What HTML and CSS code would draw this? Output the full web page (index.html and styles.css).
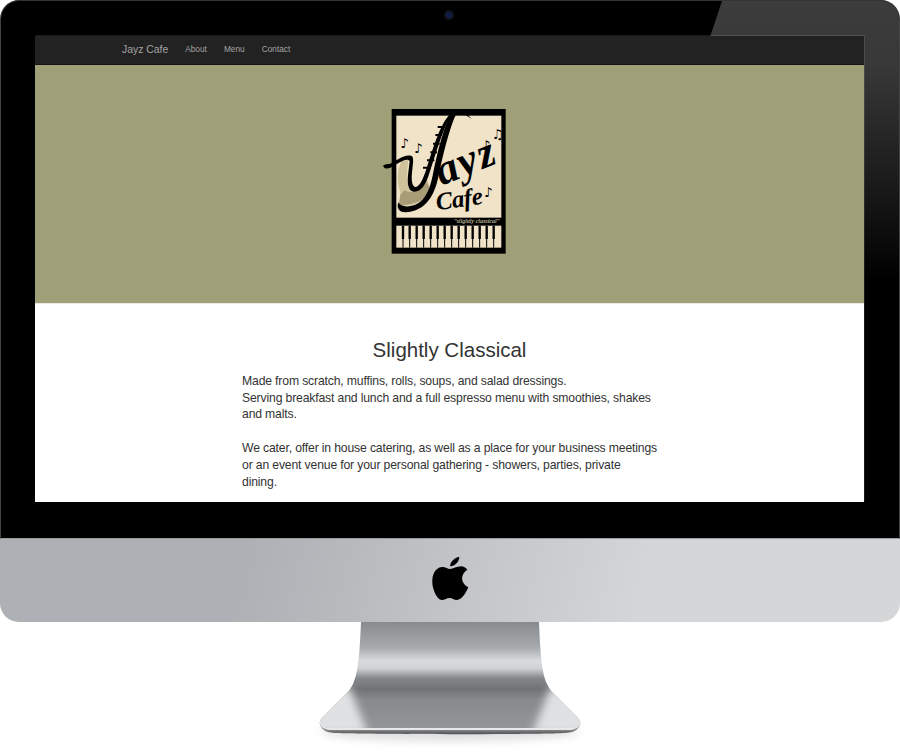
FILE: index.html
```html
<!DOCTYPE html>
<html lang="en">
<head>
<meta charset="utf-8">
<title>Jayz Cafe</title>
<link rel="stylesheet" href="styles.css">
</head>
<body>
<div class="imac">
  <div class="bezel">
    <div class="glare"></div>
    <span class="camera"></span>
    <div class="screen">
      <nav class="nav">
        <a class="brand">Jayz Cafe</a>
        <a class="link">About</a>
        <a class="link">Menu</a>
        <a class="link">Contact</a>
      </nav>
      <header class="hero">
        <svg class="logo" viewBox="16 0 510 510" aria-label="Jayz Cafe logo">
          <rect x="96" y="42" width="342" height="434" fill="#000"/>
          <rect x="110" y="62" width="315" height="306" fill="#f0e3c8"/>
          <rect x="110" y="392" width="315" height="66" fill="#f0e3c8"/>
          <path class="keyline" d="M130 392V458M150 392V458M171 392V458M192 392V458M213 392V458M234 392V458M255 392V458M276 392V458M297 392V458M318 392V458M339 392V458M360 392V458M381 392V458M402 392V458"/>
          <path class="blackkeys" d="M130 392V432M150 392V432M171 392V432M192 392V432M213 392V432M234 392V432M255 392V432M276 392V432M297 392V432M318 392V432M339 392V432M360 392V432M381 392V432M402 392V432"/>
          <path fill="#cfc39c" d="M126 198C112 222 110 262 122 292L118 330C150 340 200 320 214 285L200 246C190 280 168 292 150 282C140 262 142 225 146 195Z"/>
          <path fill="#a79c75" d="M134 286C155 298 182 292 200 262L214 285C198 316 160 332 118 330L122 300Z"/>
          <path fill="#000" d="M262 68C268 60 280 50 296 46C310 44 322 56 336 72C322 62 306 54 290 56C272 92 252 170 238 236C226 300 200 348 136 352C118 352 110 338 116 322C122 336 146 338 170 328C198 314 212 280 220 236C232 176 248 112 268 68C248 112 228 176 208 238C198 272 182 292 162 290C144 288 142 262 146 232L150 198C140 186 116 206 92 218C82 222 74 222 70 212C76 206 84 208 92 206C110 198 130 178 154 182C164 184 160 204 158 224C154 250 156 276 168 276C182 274 192 248 202 216C220 158 240 96 262 68Z"/>
          <path class="pads" d="M234 96H252M227 120H246M220 146H240M212 172H232M202 196H224M190 218H214"/>
          <g class="notes">
            <text x="122" y="158">♪</text>
            <text x="163" y="174">♪</text>
            <text x="366" y="164">♪</text>
            <text x="396" y="132">♫</text>
            <text x="373" y="305">♪</text>
          </g>
          <text class="ayz" x="246" y="272" transform="rotate(-22 246 272)">ayz</text>
          <text class="cafe" x="232" y="346" transform="rotate(-8 232 346)">Cafe</text>
          <text class="tag" x="283" y="385">"slightly classical"</text>
        </svg>
      </header>
      <main class="content">
        <h1 class="title">Slightly Classical</h1>
        <p class="copy">Made from scratch, muffins, rolls, soups, and salad dressings.<br>Serving breakfast and lunch and a full espresso menu with smoothies, shakes and malts.</p>
        <p class="copy">We cater, offer in house catering, as well as a place for your business meetings or an event venue for your personal gathering - showers, parties, private dining.</p>
      </main>
    </div>
  </div>
  <div class="chin">
    <svg class="apple" viewBox="0 0 210 210" aria-label="Apple logo">
      <path d="M105 64C106 50 118 38 133 35C133 50 120 63 105 64Z"/>
      <path d="M105 72C115 72 125 64 138 64C146 64 152 68 157 74C140 85 132 110 160 127C152 145 140 165 126 165C116 165 112 159 104 159C95 159 90 165 80 165C66 165 50 130 52 105C53 80 68 66 82 66C92 66 99 72 105 72Z"/>
    </svg>
  </div>
  <svg class="stand" viewBox="0 0 900 131" aria-hidden="true">
    <defs>
      <linearGradient id="neck" x1="0" y1="0" x2="0" y2="1">
        <stop offset="0" stop-color="#888b8e"/>
        <stop offset=".24" stop-color="#a8abae"/>
        <stop offset=".36" stop-color="#d9dcde"/>
        <stop offset=".43" stop-color="#cfd2d4"/>
        <stop offset=".52" stop-color="#85888b"/>
        <stop offset=".62" stop-color="#707376"/>
        <stop offset=".72" stop-color="#878a8d"/>
        <stop offset="1" stop-color="#94979a"/>
      </linearGradient>
      <linearGradient id="edge" x1="0" y1="0" x2="0" y2="1">
        <stop offset="0" stop-color="#b9bbbd"/>
        <stop offset=".6" stop-color="#8a8c8e"/>
        <stop offset="1" stop-color="#4f5052"/>
      </linearGradient>
      <filter id="soft" x="-10%" y="-100%" width="120%" height="300%">
        <feGaussianBlur stdDeviation="5"/>
      </filter>
      <filter id="sheen" x="-30%" y="-30%" width="160%" height="160%">
        <feGaussianBlur stdDeviation="4"/>
      </filter>
      <clipPath id="body">
        <path d="M361 0H539C540 22 541 50 547 62C550 68 552 70 556 74L578 96C581 99 581 103 578 105C574 108 570 108 566 108H334C330 108 326 108 322 105C319 103 319 99 322 96L344 74C348 70 350 68 353 62C359 50 360 22 361 0Z"/>
      </clipPath>
    </defs>
    <ellipse cx="450" cy="109" rx="130" ry="10" fill="#000" opacity=".13" filter="url(#soft)"/>
    <path fill="url(#edge)" d="M320 101C320 107 326 111 336 111C360 112.500 540 112.500 564 111C574 111 580 107 580 101Z"/>
    <g clip-path="url(#body)">
      <rect x="300" y="0" width="300" height="108" fill="url(#neck)"/>
      <g filter="url(#sheen)">
        <path fill="#dfe1e2" d="M300 82L349 64L368 112H300Z"/>
        <path fill="#dfe1e2" d="M600 82L551 64L532 112H600Z"/>
      </g>
      <path stroke="#e6e8e9" stroke-width="2" fill="none" d="M322 105C326 108 330 107 334 107H566C570 107 574 108 578 105"/>
    </g>
  </svg>
</div>
</body>
</html>
```
FILE: styles.css
```css
* { box-sizing: border-box; }
html, body { margin: 0; padding: 0; background: #fff; }
body { width: 900px; height: 753px; overflow: hidden; font-family: "Liberation Sans", Arial, sans-serif; }
.imac { width: 900px; display: flex; flex-direction: column; }
.bezel {
  position: relative;
  height: 539px;
  padding: 36px 35px 37px 34px;
  background: #000;
  border-radius: 19px 19px 0 0;
  border-top: 1px solid #333;
  border-left: 1px solid #444;
  border-right: 1px solid #444;
  border-bottom: 1px solid #9a9c9f;
  overflow: hidden;
}
.glare {
  position: absolute;
  top: 0;
  right: 0;
  width: 189px;
  height: 538px;
  background: linear-gradient(180deg, #3c3c3c 0, #383838 12%, #1a1a1a 34%, #000 52%);
  clip-path: polygon(12px 0, 100% 0, 100% 100%, 0 100%, 0 36px);
}
.camera {
  position: absolute;
  left: 445px;
  top: 11px;
  width: 6px;
  height: 6px;
  border-radius: 50%;
  background: #0e1c4a;
  box-shadow: 0 0 0 2px #141414;
}
.screen {
  position: relative;
  margin-top: -1px;
  height: 466px;
  width: 829px;
  display: flex;
  flex-direction: column;
  background: #fff;
  overflow: hidden;
  box-shadow: 1px -1px 0 rgba(255, 255, 255, .1);
}
.nav {
  height: 29px;
  flex: none;
  display: flex;
  align-items: center;
  padding-left: 87px;
  padding-bottom: 2px;
  background: #222;
  border-bottom: 1px solid #141414;
  color: #a3a3a3;
}
.brand { font-size: 10.400px; margin-right: 17px; }
.link { font-size: 8.300px; margin-right: 17px; }
.hero {
  height: 238px;
  flex: none;
  display: flex;
  justify-content: center;
  padding-top: 30px;
  background: #9fa078;
  box-shadow: 0 1px 0 #eaeae4;
}
.logo { width: 170px; height: 170px; display: block; }
.keyline { stroke: #000; stroke-width: 3; fill: none; }
.blackkeys { stroke: #000; stroke-width: 7; fill: none; }
.pads { stroke: #000; stroke-width: 6; fill: none; }
.notes text { font-family: "DejaVu Sans", sans-serif; font-size: 40px; fill: #000; }
.ayz { font-family: "Liberation Serif", serif; font-style: italic; font-weight: 700; font-size: 130px; fill: #000; letter-spacing: 5px; }
.cafe { font-family: "Liberation Serif", serif; font-style: italic; font-weight: 700; font-size: 74px; fill: #000; letter-spacing: -1px; }
.tag { font-family: "Liberation Serif", serif; font-style: italic; font-size: 18px; fill: #f0e3c8; }
.content { width: 415px; margin-left: 207px; color: #333; }
.title {
  margin: 35px 0 0;
  font-size: 20.500px;
  line-height: 24px;
  font-weight: 400;
  text-align: center;
}
.copy { margin: 11px 0 0; font-size: 12.200px; letter-spacing: -0.15px; line-height: 16.700px; }
.copy + .copy { margin-top: 17px; }
.chin {
  height: 83px;
  display: flex;
  justify-content: center;
  align-items: center;
  padding-bottom: 1px;
  background: linear-gradient(104deg, #adb0b4 27%, #d5d6d8 72%);
  border-radius: 0 0 19px 19px;
}
.apple { width: 70px; height: 70px; display: block; fill: #000; }
.stand { width: 900px; height: 131px; display: block; }
```
